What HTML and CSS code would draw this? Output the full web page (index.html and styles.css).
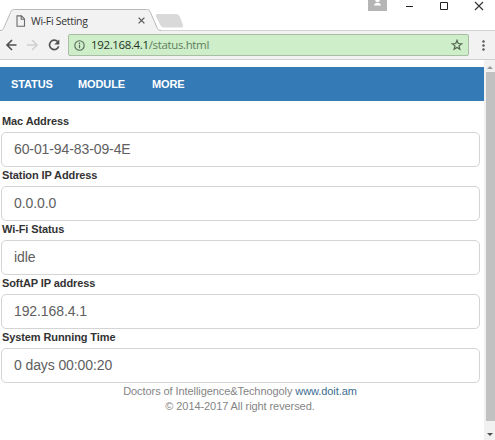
FILE: index.html
```html
<!DOCTYPE html>
<html lang="en">
<head>
<meta charset="utf-8">
<title>Wi-Fi Setting</title>
<link rel="stylesheet" href="styles.css">
</head>
<body>
<div class="window">
  <header class="tabstrip">
    <svg class="tab-shape" width="190" height="31" viewBox="0 0 190 31">
      <path d="M157 14h19c2 0 3 1 4 3l3 8c.5 2-.5 2.500-2 2.500h-17c-2 0-3-1-4-3l-4-8c-.5-1.500 0-2.500 1-2.500z" fill="#d9d9d9"/>
      <path d="M0 31c2 0 3-1 4-3l6.500-15.500c1-2.500 2-3 4-3h132c2 0 3 .5 4 3L157 28c1 2 2 3 4 3z" fill="#f2f2f2"/>
      <path d="M0 30.500c2 0 3-1 4-3l6.500-15c1-2.500 2-3 4-3h132c2 0 3 .5 4 3l6.500 15c1 2 2 3 4 3" fill="none" stroke="#b9b9b9"/>
    </svg>
    <div class="tab">
      <svg width="10" height="12" viewBox="0 0 10 12"><path d="M1 .9h4.500l3 3v7.300H1zM5.200 1v3.200h3.300" fill="none" stroke="#6b6b6b" stroke-width="1.100"/></svg>
      <span class="tab-title">Wi-Fi Setting</span>
      <svg width="7" height="7" viewBox="0 0 7 7"><path d="M.6.6l5.800 5.800M6.400.6L.6 6.400" stroke="#5a5a5a" stroke-width="1.300"/></svg>
    </div>
    <div class="controls">
      <svg width="127" height="12" viewBox="0 0 127 12">
        <path d="M0 0h19v11H0z" fill="#b5b5b5"/><circle cx="9.500" cy="0" r="2.300" fill="#fff"/><path d="M6 5.500c0-2 2-2.500 3.500-2.500s3.500.5 3.500 2.500z" fill="#fff"/>
        <path d="M38 6.500h7" stroke="#222"/>
        <path d="M72.500 2.500h7v7h-7z" fill="none" stroke="#222"/>
        <path d="M107 2l8 8M115 2l-8 8" stroke="#333" stroke-width="1.100"/>
      </svg>
    </div>
  </header>
  <div class="toolbar">
    <svg class="nav-icons" width="62" height="14" viewBox="0 0 62 14" fill="none">
      <path d="M16.500 7H7.500M12 2L7 7l5 5" stroke="#505050" stroke-width="1.600"/>
      <path d="M27 7h9.500M32 2l5 5-5 5" stroke="#cfcfcf" stroke-width="1.500"/>
      <path d="M57.800 3.800A4.700 4.700 0 1 0 58.700 8.300" stroke="#505050" stroke-width="1.600"/><path d="M59.300 1.600v5h-5z" fill="#505050"/>
    </svg>
    <div class="address">
      <svg width="11" height="11" viewBox="0 0 11 11"><circle cx="5.500" cy="5.500" r="4.700" fill="none" stroke="#5b6a5b" stroke-width="1.100"/><path d="M5.500 4.800v3.400M5.500 2.600v1.300" stroke="#5b6a5b" stroke-width="1.200"/></svg>
      <span class="url">192.168.4.1<span class="path">/status.html</span></span>
      <svg class="star" width="12" height="12" viewBox="0 0 12 12"><path d="M6 1.300l1.250 3.200 3.450.2-2.700 2.200.9 3.400L6 8.400l-2.900 1.900.9-3.400-2.700-2.200 3.450-.2z" fill="none" stroke="#53624f" stroke-width="1.150"/></svg>
    </div>
    <svg class="menu" width="3" height="11" viewBox="0 0 3 11" fill="#555"><circle cx="1.500" cy="1.500" r="1.200"/><circle cx="1.500" cy="5.500" r="1.200"/><circle cx="1.500" cy="9.500" r="1.200"/></svg>
  </div>
  <div class="viewport">
    <main class="page">
      <nav class="navbar"><a class="n1">STATUS</a><a class="n2">MODULE</a><a>MORE</a></nav>
      <form class="form">
        <label>Mac Address</label><div class="field">60-01-94-83-09-4E</div>
        <label>Station IP Address</label><div class="field">0.0.0.0</div>
        <label>Wi-Fi Status</label><div class="field">idle</div>
        <label>SoftAP IP address</label><div class="field">192.168.4.1</div>
        <label>System Running Time</label><div class="field">0 days 00:00:20</div>
      </form>
      <footer class="footer">
        <div>Doctors of Intelligence&amp;Technogoly <a>www.doit.am</a></div>
        <div>© 2014-2017 All right reversed.</div>
      </footer>
    </main>
    <div class="scrollbar">
      <svg width="6" height="3" viewBox="0 0 6 3"><path d="M0 3l3-3 3 3z" fill="#999"/></svg>
      <div class="thumb"></div>
      <svg width="6" height="3" viewBox="0 0 6 3"><path d="M0 0h6L3 3z" fill="#505050"/></svg>
    </div>
  </div>
</div>
</body>
</html>
```
FILE: styles.css
```css
* { box-sizing: border-box; }
body { margin: 0; background: #fff; font-family: "Liberation Sans", Arial, sans-serif; }
svg { display: block; flex: none; }
.window { width: 495px; height: 440px; display: flex; flex-direction: column; overflow: hidden; }
.tabstrip { height: 31px; position: relative; display: flex; justify-content: space-between; border-bottom: 1px solid #d3d3d3; }
.tab-shape { position: absolute; left: 0; top: 0; }
.tab { position: relative; display: flex; align-items: center; padding: 11px 0 0 16px; height: 30px; width: 145px; }
.tab-title { flex: 1; padding-left: 5px; font: 10.5px/14px "Open Sans", sans-serif; letter-spacing: -0.3px; color: #333; }
.controls { width: 127px; }
.toolbar { height: 29px; background: #f2f2f2; border-bottom: 1px solid #d0d0d0; display: flex; align-items: center; }
.address { margin-left: 6px; width: 401px; height: 22px; border: 1px solid #a9bda5; border-radius: 2px; background: #cdeec8; display: flex; align-items: center; padding: 0 5px; }
.url { flex: 1; padding-left: 6px; font: 11.5px/18px "Open Sans", sans-serif; letter-spacing: -0.36px; color: #263326; }
.path { color: #62805f; }
.menu { margin-left: 13px; }
.viewport { height: 380px; display: flex; }
.page { width: 484px; padding-top: 7px; }
.navbar { height: 34px; background: #337ab7; color: #fff; font-size: 11px; font-weight: bold; line-height: 34px; letter-spacing: -0.1px; display: flex; padding-left: 11px; }
.n1, .n2 { flex: none; }
.n1 { width: 67px; }
.n2 { width: 74px; }
.form { padding: 12px 4px 0 1px; }
label { display: block; height: 19px; padding: 1px 0 0 1px; font-size: 11px; font-weight: bold; line-height: 15px; color: #333; letter-spacing: -0.1px; }
.field { height: 35px; border: 1px solid #d4d4d4; border-radius: 5px; padding-left: 12px; font-size: 14px; line-height: 33px; letter-spacing: -0.1px; color: #606060; }
.footer { padding: 1px 4px 0 0; text-align: center; font-size: 11px; line-height: 15px; letter-spacing: -0.08px; color: #858585; }
.footer a { color: #3b6d90; }
.scrollbar { width: 11px; background: #f1f1f1; display: flex; flex-direction: column; align-items: center; padding: 6px 0 4px; }
.thumb { width: 9px; height: 349px; margin: 3px 0 12px 1px; background: #c1c1c1; }
```
